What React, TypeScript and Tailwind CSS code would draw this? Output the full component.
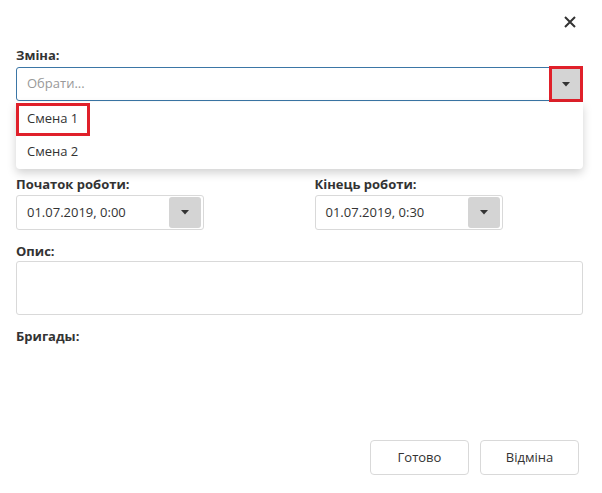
import React from "react";

const Caret = () => (
  <svg width="8" height="5" viewBox="0 0 8 5" className="block">
    <path d="M0 0h8L4 4.5z" fill="#333" />
  </svg>
);

const DateField = ({ value }: { value: string }) => (
  <div className="flex h-[35px] w-[188px] items-center rounded-[3px] border border-[#d9d9d9] pl-[10px] pr-[2px]">
    <span className="flex-1 text-[13px] text-[#333]">{value}</span>
    <button className="flex h-[31px] w-[32px] items-center justify-center rounded-[3px] bg-[#d4d4d4]">
      <Caret />
    </button>
  </div>
);

export default function App() {
  return (
    <div className="relative h-[493px] w-full bg-white font-['Open_Sans',sans-serif] text-[#333]">
      <div className="flex h-[44px] items-center justify-end pr-[26px]">
        <svg width="12" height="12" viewBox="0 0 12 12">
          <path d="M1 1l10 10M11 1L1 11" stroke="#333" strokeWidth="2" />
        </svg>
      </div>

      <div className="pl-[16px] pr-[19px]">
        <div className="relative">
          <label className="mb-[1px] block text-[13px] font-bold leading-[22px]">Зміна:</label>
          <div className="flex h-[34px] items-stretch rounded-[3px] border border-[#3b76a6]">
            <span className="flex flex-1 items-center pl-[10px] text-[13px] text-[#999]">Обрати...</span>
            <button className="-my-[2px] -mr-[1px] flex w-[34px] items-center justify-center border-[3px] border-[#e0202a] bg-[#d4d4d4]">
              <Caret />
            </button>
          </div>

          <div className="absolute left-0 right-0 top-[58px] z-10 rounded-b-[4px] bg-white pb-[1px] shadow-[0_4px_10px_rgba(0,0,0,0.18)]">
            <div className="flex h-[34px] items-center">
              <span className="flex h-[33px] w-[74px] items-center border-[3px] border-[#e0202a] pl-[8px] text-[13px]">
                Смена 1
              </span>
            </div>
            <div className="flex h-[32px] items-center pl-[11px] text-[13px]">Смена 2</div>
          </div>
        </div>

        <div className="mt-[74px] grid grid-cols-2 gap-x-[30px]">
          <div>
            <label className="mb-[1px] block text-[13px] font-bold leading-[19px]">Початок роботи:</label>
            <DateField value="01.07.2019, 0:00" />
          </div>
          <div>
            <label className="mb-[1px] block text-[13px] font-bold leading-[19px]">Кінець роботи:</label>
            <DateField value="01.07.2019, 0:30" />
          </div>
        </div>

        <label className="mt-[12px] block text-[13px] font-bold leading-[19px]">Опис:</label>
        <div className="h-[54px] rounded-[3px] border border-[#d9d9d9]" />

        <label className="mt-[12px] block text-[13px] font-bold leading-[19px]">Бригады:</label>

        <div className="mt-[94px] flex justify-end gap-[11px] pr-[4px]">
          <button className="h-[35px] w-[99px] rounded-[4px] border border-[#d9d9d9] bg-white text-[13px] text-[#333]">
            Готово
          </button>
          <button className="h-[35px] w-[99px] rounded-[4px] border border-[#d9d9d9] bg-white text-[13px] text-[#333]">
            Відміна
          </button>
        </div>
      </div>
    </div>
  );
}
